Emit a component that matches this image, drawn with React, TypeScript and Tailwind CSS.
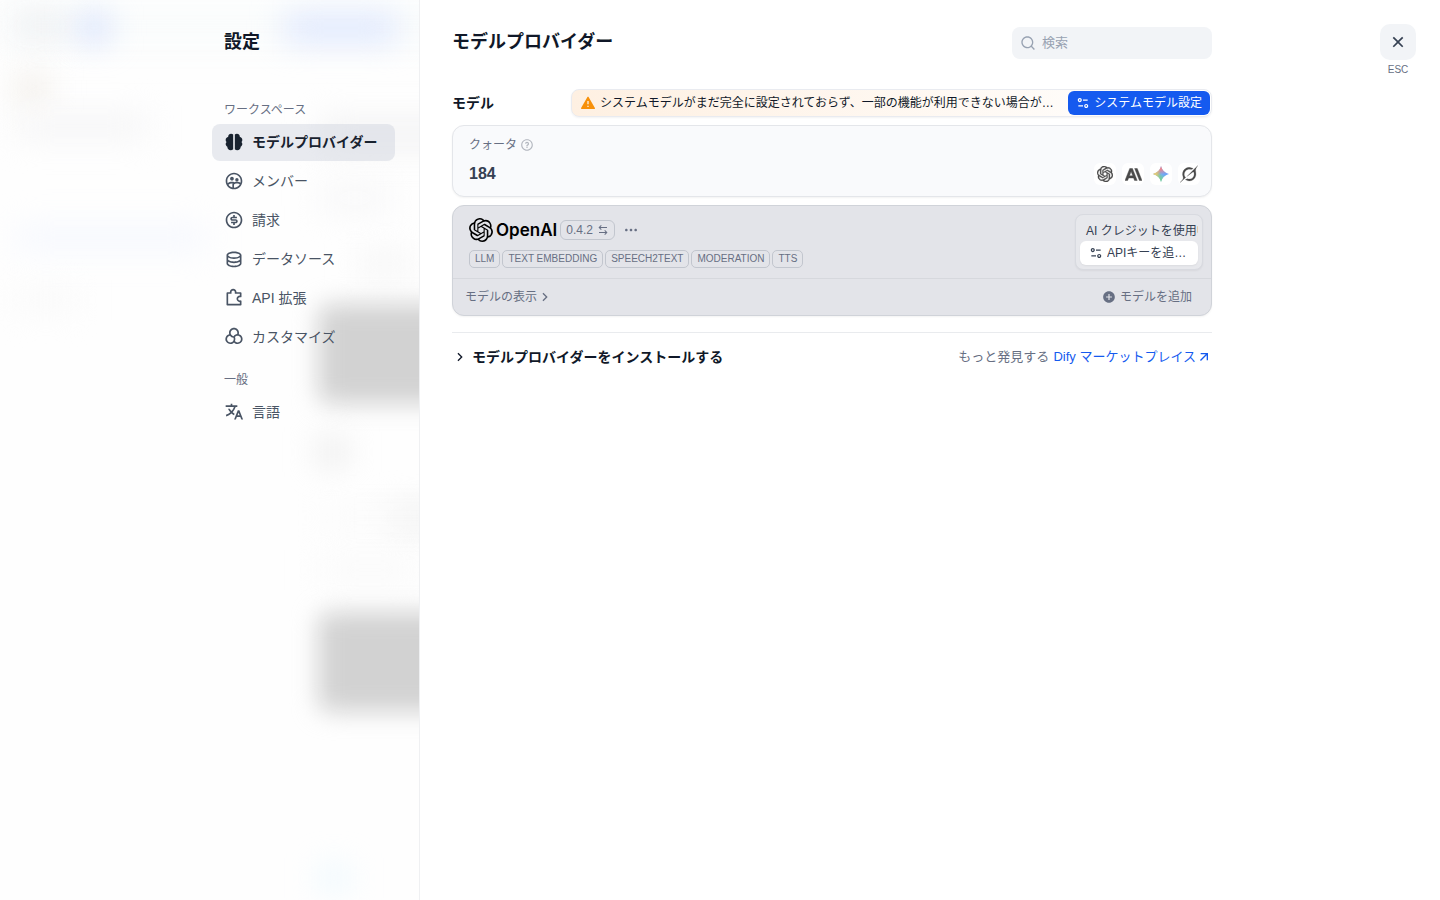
import type { ReactNode } from 'react';
import {
  RiAddCircleFill,
  RiAlertFill,
  RiArrowLeftRightLine,
  RiArrowRightSLine,
  RiArrowRightUpLine,
  RiBrain2Fill,
  RiCloseLine,
  RiColorFilterLine,
  RiDatabase2Line,
  RiEqualizer2Line,
  RiGroup2Line,
  RiMoneyDollarCircleLine,
  RiMoreFill,
  RiPuzzle2Line,
  RiQuestionLine,
  RiSearchLine,
  RiTranslate2,
} from 'react-icons/ri';
import { SiAnthropic, SiOpenai } from 'react-icons/si';

const groups = [
  {
    label: 'ワークスペース',
    items: [
      { label: 'モデルプロバイダー', icon: RiBrain2Fill, active: true },
      { label: 'メンバー', icon: RiGroup2Line },
      { label: '請求', icon: RiMoneyDollarCircleLine },
      { label: 'データソース', icon: RiDatabase2Line },
      { label: 'API 拡張', icon: RiPuzzle2Line },
      { label: 'カスタマイズ', icon: RiColorFilterLine },
    ],
  },
  {
    label: '一般',
    items: [{ label: '言語', icon: RiTranslate2 }],
  },
];

const tags = ['LLM', 'TEXT EMBEDDING', 'SPEECH2TEXT', 'MODERATION', 'TTS'];

function GeminiIcon() {
  return (
    <svg viewBox="0 0 24 24" className="w-4 h-4" aria-hidden="true">
      <defs>
        <linearGradient id="gem-base" x1="4" y1="14" x2="22" y2="8" gradientUnits="userSpaceOnUse">
          <stop offset="0.2" stopColor="#7cc7b4" />
          <stop offset="0.5" stopColor="#74adf8" />
          <stop offset="1" stopColor="#649dfb" />
        </linearGradient>
        <linearGradient id="gem-red" x1="11" y1="0" x2="13" y2="13" gradientUnits="userSpaceOnUse">
          <stop offset="0.35" stopColor="#f0858a" />
          <stop offset="1" stopColor="#f0858a" stopOpacity="0" />
        </linearGradient>
        <linearGradient id="gem-yellow" x1="0" y1="12" x2="11" y2="12" gradientUnits="userSpaceOnUse">
          <stop offset="0.3" stopColor="#f0cc70" />
          <stop offset="1" stopColor="#f0cc70" stopOpacity="0" />
        </linearGradient>
        <linearGradient id="gem-green" x1="11" y1="24" x2="13" y2="12" gradientUnits="userSpaceOnUse">
          <stop offset="0.3" stopColor="#74d096" />
          <stop offset="1" stopColor="#74d096" stopOpacity="0" />
        </linearGradient>
      </defs>
      {['url(#gem-base)', 'url(#gem-green)', 'url(#gem-red)', 'url(#gem-yellow)'].map(fill => (
        <path key={fill} fill={fill} d="M12 0c.6 2.500 1.400 4.600 2.900 6.400 1.700 2.100 4.600 4.400 9.100 5.600-4.500 1.200-7.400 3.500-9.100 5.600-1.500 1.800-2.300 3.900-2.900 6.400-.6-2.500-1.400-4.600-2.900-6.400C7.400 15.500 4.500 13.200 0 12c4.500-1.200 7.400-3.500 9.100-5.600C10.600 4.600 11.400 2.500 12 0z" />
      ))}
    </svg>
  );
}

function GrokIcon() {
  return (
    <svg viewBox="0 0 24 24" className="w-[18px] h-[18px]" fill="currentColor" stroke="currentColor" strokeWidth="0.3" aria-hidden="true">
      <path d="M9.27 15.29l7.978-5.897c.391-.29.95-.177 1.137.272.98 2.369.542 5.215-1.41 7.169-1.951 1.954-4.667 2.382-7.149 1.406l-2.711 1.257c3.889 2.661 8.611 2.003 11.562-.953 2.341-2.344 3.066-5.539 2.388-8.42l.006.007c-.983-4.232.242-5.924 2.75-9.383.06-.082.12-.164.179-.248l-3.301 3.305v-.01L9.267 15.292M7.623 16.723c-2.792-2.67-2.31-6.801.071-9.184 1.761-1.763 4.647-2.483 7.166-1.425l2.705-1.25a7.808 7.808 0 00-1.829-1A8.975 8.975 0 005.984 5.83c-2.533 2.536-3.33 6.436-1.962 9.764 1.022 2.487-.653 4.246-2.34 6.022-.599.63-1.199 1.259-1.682 1.925l7.62-6.815" />
    </svg>
  );
}

function ProviderChip({ children }: { children: ReactNode }) {
  return (
    <span className="w-[22px] h-[22px] rounded-md bg-white flex items-center justify-center text-[#4a4a4a]">
      {children}
    </span>
  );
}

/* Blurred page that shows through behind the sidebar */
function Backdrop() {
  return (
    <div className="absolute inset-0 overflow-hidden bg-[#fefefe]" aria-hidden="true">
      <div className="absolute left-0 top-0 w-full h-12 bg-[#fafcfc] blur-lg" />
      <div className="absolute left-4 top-4 w-[50px] h-5 bg-[#eaecef] blur-lg" />
      <div className="absolute left-20 top-4 w-7 h-6 bg-[#cddafd] blur-lg" />
      <div className="absolute left-[285px] top-4 w-[112px] h-6 bg-[#dae4fe] blur-lg" />
      <div className="absolute left-4 top-[76px] w-8 h-6 bg-[#f0ebe4] blur-lg" />
      <div className="absolute left-4 top-[116px] w-[130px] h-5 bg-[#f4f4f5] blur-lg" />
      <div className="absolute left-4 top-[228px] w-[190px] h-5 bg-[#f4f7ff] blur-lg" />
      <div className="absolute left-4 top-[290px] w-[60px] h-5 bg-[#f9f9f9] blur-lg" />
      <div className="absolute left-[320px] top-[120px] w-[200px] h-7 bg-[#f2f2f3] blur-lg" />
      <div className="absolute left-[320px] top-[186px] w-[70px] h-6 bg-[#f7f7f8] blur-lg" />
      <div className="absolute left-[360px] top-[254px] w-[50px] h-5 bg-[#f5f5f5] blur-lg" />
      <div className="absolute left-[318px] top-[304px] w-[400px] h-[100px] rounded-xl bg-[#d2d2d2] blur-md" />
      <div className="absolute left-[318px] top-[442px] w-7 h-5 bg-[#e4e4e4] blur-lg" />
      <div className="absolute left-[390px] top-[508px] w-[70px] h-5 bg-[#eeeeee] blur-lg" />
      <div className="absolute left-[320px] top-[506px] w-[140px] h-6 bg-[#fafafa]/50 blur-lg" />
      <div className="absolute left-[320px] top-[560px] w-[100px] h-5 bg-[#fafafa] blur-lg" />
      <div className="absolute left-[318px] top-[612px] w-[400px] h-[100px] rounded-xl bg-[#d2d2d2] blur-md" />
      <div className="absolute left-[320px] top-[868px] w-7 h-5 bg-[#e6f7ff] blur-lg" />
    </div>
  );
}

function Sidebar() {
  return (
    <aside className="w-56 shrink-0 pl-4 pr-6 border-r border-[#eff0f2]">
      <h1 className="mt-6 mb-[30px] px-3 py-2 text-lg leading-5 font-semibold text-[#101828]">設定</h1>
      <nav className="flex flex-col gap-1">
        {groups.map(group => (
          <div key={group.label}>
            <p className="pt-3 pb-1.5 pl-3 text-xs leading-4 text-[#676f83]">{group.label}</p>
            <div className="flex flex-col gap-0.5">
              {group.items.map(item => (
                <button
                  key={item.label}
                  type="button"
                  className={
                    item.active
                      ? 'flex items-center gap-2 h-[37px] pl-3 pb-px rounded-lg bg-[#c8ceda]/40 text-sm font-semibold text-[#18222f]'
                      : 'flex items-center gap-2 h-[37px] pl-3 pb-px rounded-lg text-sm text-[#495464]'
                  }
                >
                  <item.icon className="w-5 h-5 shrink-0" />
                  <span className="whitespace-nowrap">{item.label}</span>
                </button>
              ))}
            </div>
          </div>
        ))}
      </nav>
    </aside>
  );
}

function SystemModelBanner() {
  return (
    <div className="flex items-center h-7 w-[641px] pl-2 pr-px rounded-lg border border-[#e9ebf0] bg-linear-to-r from-[#fef0e2] to-white shadow-xs">
      <RiAlertFill className="w-4 h-4 shrink-0 text-[#f79009]" />
      <p className="ml-1 mr-3 flex-1 truncate text-xs text-[#101828]">
        システムモデルがまだ完全に設定されておらず、一部の機能が利用できない場合があります。
      </p>
      <button type="button" className="flex items-center gap-1 h-6 px-2 rounded-md bg-[#155aef] text-xs text-white whitespace-nowrap">
        <RiEqualizer2Line className="w-3.5 h-3.5" />
        システムモデル設定
      </button>
    </div>
  );
}

function QuotaCard() {
  return (
    <section className="flex items-end justify-between h-[72px] pl-4 pr-[11px] py-[11px] rounded-xl border border-[#e4e6ea] bg-[#f9fafc] shadow-xs">
      <div>
        <div className="flex items-center gap-[3px] h-5 text-xs text-[#676f83]">
          クォータ
          <RiQuestionLine className="w-3.5 h-3.5 text-[#b3b7bf]" />
        </div>
        <div className="mt-2 h-[22px] leading-[22px] text-base font-semibold text-[#354052]">184</div>
      </div>
      <div className="flex items-center gap-1.5">
        <ProviderChip><SiOpenai className="w-4 h-4" stroke="currentColor" strokeWidth="0.6" /></ProviderChip>
        <ProviderChip><SiAnthropic className="w-[17px] h-[17px]" stroke="currentColor" strokeWidth="0.6" /></ProviderChip>
        <ProviderChip><GeminiIcon /></ProviderChip>
        <ProviderChip><GrokIcon /></ProviderChip>
      </div>
    </section>
  );
}

function ProviderCard() {
  return (
    <section className="mt-2 rounded-xl border border-[#d0d3d9] bg-[#e3e4e9] shadow-xs">
      <div className="flex items-start justify-between h-[72px] pl-4 pr-2">
        <div className="pt-3">
          <div className="flex items-center h-6">
            <div className="flex items-center gap-[3px] text-black">
              <SiOpenai className="w-6 h-6" />
              <span className="font-['Inter',sans-serif] text-[17px] leading-6 font-semibold">OpenAI</span>
            </div>
            <button type="button" className="ml-[3px] flex items-center gap-1 h-5 px-[5px] rounded-md border border-[#c2c6ce] text-xs text-[#676f83]">
              0.4.2
              <RiArrowLeftRightLine className="w-3 h-3" />
            </button>
            <button type="button" aria-label="その他" className="ml-2 text-[#676f83]">
              <RiMoreFill className="w-4 h-4" />
            </button>
          </div>
          <div className="flex gap-0.5 mt-2">
            {tags.map(tag => (
              <span key={tag} className="h-[18px] px-[5px] leading-4 rounded-[5px] border border-[#c2c6ce] text-[10px] font-medium text-[#676f83]">
                {tag}
              </span>
            ))}
          </div>
        </div>
        <div className="mt-2 w-32 h-14 px-1 pt-1.5 rounded-lg border border-[#d8dae0] bg-[#e7e8ec] shadow-xs">
          <p className="h-5 pl-1.5 leading-5 text-xs text-[#354052] whitespace-nowrap overflow-hidden">AI クレジットを使用中</p>
          <button type="button" className="flex items-center gap-1 w-full h-6 pl-[9px] pr-2 rounded-md bg-white shadow-xs text-xs text-[#354052]">
            <RiEqualizer2Line className="w-3.5 h-3.5 shrink-0" />
            <span className="truncate">APIキーを追加する</span>
          </button>
        </div>
      </div>
      <div className="flex items-center justify-between h-[37px] pl-3 pr-[19px] border-t border-[#d6d8dd] text-xs text-[#676f83]">
        <button type="button" className="flex items-center">
          モデルの表示
          <RiArrowRightSLine className="w-4 h-4" />
        </button>
        <button type="button" className="flex items-center gap-1">
          <RiAddCircleFill className="w-3.5 h-3.5" />
          モデルを追加
        </button>
      </div>
    </section>
  );
}

export default function App() {
  return (
    <div className="relative min-h-screen bg-white font-['Liberation_Sans','Noto_Sans_CJK_JP',sans-serif]">
      <Backdrop />
      <div className="absolute inset-y-0 right-0 w-1/2 bg-white" />
      <div className="relative flex max-w-[1048px] min-h-screen mx-auto">
        <Sidebar />
        <main className="flex-1 min-w-0 px-8 bg-white">
          <header className="flex items-start justify-between pt-[27px] mb-[30px]">
            <h2 className="text-lg leading-[30px] font-semibold text-[#101828]">モデルプロバイダー</h2>
            <label className="flex items-center gap-1.5 w-[200px] h-8 px-2 rounded-lg bg-[#f2f4f7]">
              <RiSearchLine className="w-4 h-4 shrink-0 text-[#98a2b2]" />
              <input
                type="text"
                aria-label="検索"
                placeholder="検索"
                className="w-full min-w-0 bg-transparent outline-none text-[13px] placeholder:text-[#98a2b2]"
              />
            </label>
          </header>

          <div className="flex items-center justify-between mb-2">
            <h3 className="text-sm font-semibold text-[#101828]">モデル</h3>
            <SystemModelBanner />
          </div>

          <QuotaCard />
          <ProviderCard />

          <div className="flex items-center justify-between mt-4 pt-3.5 border-t border-[#e9ebee]">
            <button type="button" className="flex items-center gap-1 text-sm font-semibold text-[#101828]">
              <RiArrowRightSLine className="w-4 h-4" />
              モデルプロバイダーをインストールする
            </button>
            <div className="flex items-center gap-1 text-[13px] text-[#676f83]">
              もっと発見する
              <a href="#marketplace" className="flex items-center text-[#155aef]">
                Dify マーケットプレイス
                <RiArrowRightUpLine className="w-4 h-4" />
              </a>
            </div>
          </div>
        </main>
      </div>

      <div className="absolute top-6 right-6 flex flex-col items-center">
        <button type="button" aria-label="閉じる" className="flex items-center justify-center w-9 h-9 rounded-[10px] bg-[#f2f4f7] text-[#354052]">
          <RiCloseLine className="w-5 h-5" />
        </button>
        <span className="mt-0.5 text-[10px] leading-4 text-[#676f83]">ESC</span>
      </div>
    </div>
  );
}
